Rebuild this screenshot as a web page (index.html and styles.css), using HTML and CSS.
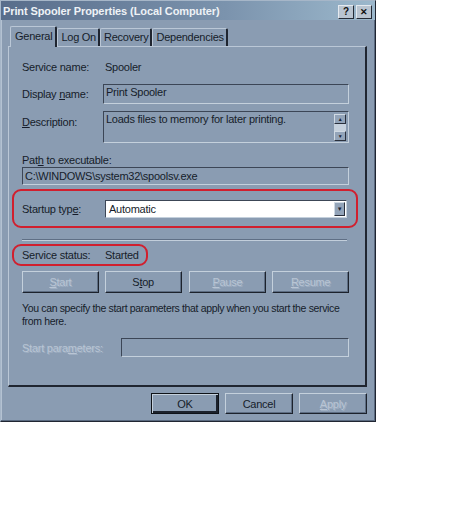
FILE: index.html
```html
<!DOCTYPE html>
<html lang="en">
<head>
  <meta charset="UTF-8" />
  <title>Print Spooler Properties (Local Computer)</title>
  <link rel="stylesheet" href="styles.css">
</head>
<body>
  <div class="window">
    <div class="titlebar">
      <span class="title">Print Spooler Properties (Local Computer)</span>
      <div class="caption-btns">
        <span class="cap-btn">?</span>
        <span class="cap-btn cap-close">&#10005;</span>
      </div>
    </div>

    <div class="tabs">
      <span class="tab active">General</span>
      <span class="tab">Log On</span>
      <span class="tab">Recovery</span>
      <span class="tab">Dependencies</span>
    </div>

    <div class="panel">
      <div class="row row-name">
        <span class="label">Service name:</span>
        <span class="value">Spooler</span>
      </div>

      <div class="row row-display">
        <span class="label">Display <u>n</u>ame:</span>
        <div class="field field-display">Print Spooler</div>
      </div>

      <div class="row row-desc">
        <span class="label label-desc"><u>D</u>escription:</span>
        <div class="field field-desc">
          <span>Loads files to memory for later printing.</span>
          <div class="scroll">
            <span class="sb-btn">&#9650;</span>
            <span class="sb-track"></span>
            <span class="sb-btn">&#9660;</span>
          </div>
        </div>
      </div>

      <div class="path-label">Pat<u>h</u> to executable:</div>
      <div class="field field-path">C:\WINDOWS\system32\spoolsv.exe</div>

      <div class="marked marked-startup">
        <span class="label">Startup typ<u>e</u>:</span>
        <div class="combo">
          <span>Automatic</span>
          <span class="combo-btn">&#9660;</span>
        </div>
      </div>

      <div class="separator"></div>

      <div class="marked marked-status">
        <span class="label">Service status:</span>
        <span class="value">Started</span>
      </div>

      <div class="svc-buttons">
        <span class="btn disabled"><u>S</u>tart</span>
        <span class="btn">S<u>t</u>op</span>
        <span class="btn disabled"><u>P</u>ause</span>
        <span class="btn disabled"><u>R</u>esume</span>
      </div>

      <p class="hint">You can specify the start parameters that apply when you start the service<br>from here.</p>

      <div class="row row-params">
        <span class="label disabled-text">Start para<u>m</u>eters:</span>
        <div class="field field-params"></div>
      </div>
    </div>

    <div class="dialog-buttons">
      <span class="btn default">OK</span>
      <span class="btn">Cancel</span>
      <span class="btn disabled"><u>A</u>pply</span>
    </div>
  </div>
</body>
</html>
```

FILE: styles.css
```css
body {
  margin: 0;
  background: #fff;
  font-family: "Liberation Sans", Arial, sans-serif;
  font-size: 11px;
  letter-spacing: -0.25px;
  color: #161c2a;
}
u {
  text-decoration: underline;
  text-underline-offset: 1px;
}
.window {
  width: 374px;
  height: 420px;
  background: #8a9cb2;
  border-top: 1px solid #a6b6c8;
  border-left: 1px solid #a6b6c8;
  border-right: 1px solid #202632;
  border-bottom: 1px solid #202632;
  box-shadow: inset -1px -1px 0 #5a6a80, inset 1px 1px 0 #b4c2d2;
}
.titlebar {
  height: 19px;
  background: linear-gradient(to right, #586d8b, #7b93ad 60%, #9cb8cc);
  display: flex;
  align-items: center;
  justify-content: space-between;
  padding: 0 3px 0 2px;
}
.title {
  color: #eef2f6;
  font-weight: bold;
  letter-spacing: -0.1px;
}
.caption-btns {
  display: flex;
  gap: 2px;
  margin-top: 2px;
}
.cap-btn {
  width: 14px;
  height: 12px;
  background: #b9c4d0;
  border-top: 1px solid #e4e9ef;
  border-left: 1px solid #e4e9ef;
  border-right: 1px solid #252b36;
  border-bottom: 1px solid #252b36;
  font-size: 10px;
  font-weight: bold;
  line-height: 12px;
  text-align: center;
  letter-spacing: 0;
  color: #111;
}
.cap-close {
  font-size: 9px;
}

/* tabs */
.tabs {
  display: flex;
  align-items: flex-end;
  height: 20px;
  margin-top: 6px;
  padding-left: 9px;
  position: relative;
  z-index: 1;
}
.tab {
  height: 17px;
  line-height: 17px;
  padding: 0 2px 0 3px;
  border-top: 1px solid #bac7d6;
  border-left: 1px solid #bac7d6;
  border-right: 2px solid #1f2530;
  border-radius: 2px 2px 0 0;
}
.tab.active {
  height: 20px;
  line-height: 19px;
  padding: 0 3px 0 4px;
  margin-bottom: -1px;
  background: #8a9cb2;
}

/* tab page */
.panel {
  margin: 0 8px 0 7px;
  height: 338px;
  border-top: 1px solid #bac7d6;
  border-left: 1px solid #bac7d6;
  border-right: 2px solid #1f2530;
  border-bottom: 2px solid #1f2530;
  padding: 0 16px 0 13px;
}
.row {
  display: flex;
  align-items: center;
}
.label {
  width: 83px;
  flex: none;
}
.row-name {
  height: 16px;
  margin-top: 12px;
}
.field {
  box-sizing: border-box;
  border-top: 1px solid #3c4656;
  border-left: 1px solid #3c4656;
  border-right: 1px solid #c4d0dc;
  border-bottom: 1px solid #c4d0dc;
  padding: 1px 2px;
}
.row-display {
  margin-top: 9px;
}
.field-display {
  margin-left: -2px;
  width: 248px;
  height: 20px;
}
.row-desc {
  margin-top: 7px;
  align-items: flex-start;
}
.label-desc {
  padding-top: 5px;
}
.field-desc {
  margin-left: -2px;
  width: 248px;
  height: 32px;
  display: flex;
  justify-content: space-between;
}
.scroll {
  width: 12px;
  display: flex;
  flex-direction: column;
  margin-top: 1px;
}
.sb-btn {
  height: 10px;
  background: #93a4b9;
  border-top: 1px solid #d0dae4;
  border-left: 1px solid #d0dae4;
  border-right: 1px solid #2a303c;
  border-bottom: 1px solid #2a303c;
  box-sizing: border-box;
  font-size: 5px;
  line-height: 8px;
  text-align: center;
  color: #1c2230;
}
.sb-track {
  height: 8px;
  background: #c6d1dd;
}
.path-label {
  margin-top: 10px;
  height: 14px;
  line-height: 14px;
}
.field-path {
  width: 327px;
  height: 18px;
  line-height: 14px;
}

/* red annotation rings */
.marked {
  display: flex;
  align-items: center;
  border: 2px solid #d11f2e;
  border-radius: 9px;
  margin-left: -10px;
  padding-left: 8px;
}
.marked-startup {
  margin-top: 4px;
  width: 334px;
  height: 35px;
}
.combo {
  width: 242px;
  height: 18px;
  box-sizing: border-box;
  background: #fff;
  border-top: 1px solid #3c4656;
  border-left: 1px solid #3c4656;
  border-right: 1px solid #c4d0dc;
  border-bottom: 1px solid #c4d0dc;
  display: flex;
  align-items: center;
  justify-content: space-between;
  padding-left: 3px;
}
.combo-btn {
  width: 11px;
  height: 14px;
  margin-right: 1px;
  background: #93a4b9;
  border-top: 1px solid #d0dae4;
  border-left: 1px solid #d0dae4;
  border-right: 1px solid #2a303c;
  border-bottom: 1px solid #2a303c;
  box-sizing: border-box;
  font-size: 6px;
  line-height: 12px;
  text-align: center;
  color: #1c2230;
}
.separator {
  margin-top: 11px;
  width: 325px;
  border-top: 1px solid #5f6f85;
  border-bottom: 1px solid #c2cedb;
}
.marked-status {
  margin-top: 3px;
  width: 124px;
  height: 18px;
}

/* buttons */
.btn {
  box-sizing: border-box;
  height: 22px;
  display: flex;
  align-items: center;
  justify-content: center;
  border-top: 1px solid #c4d0dc;
  border-left: 1px solid #c4d0dc;
  border-right: 1px solid #1c222c;
  border-bottom: 1px solid #1c222c;
  box-shadow: inset -1px -1px 0 #5d6d83;
}
.btn.disabled,
.disabled-text {
  color: #b9c5d4;
  text-shadow: 1px 1px 0 #9eaec2;
}
.btn.default {
  border: 1px solid #0e1218;
  box-shadow: inset 1px 1px 0 #c4d0dc, inset -2px -2px 0 #1c222c;
}
.svc-buttons {
  display: flex;
  gap: 6px;
  margin-top: 5px;
}
.svc-buttons .btn {
  width: 77px;
}
.svc-buttons .btn:nth-child(3) {
  margin-left: 1px;
  width: 78px;
}
.hint {
  margin: 9px 0 0;
  font-size: 10.5px;
  letter-spacing: -0.35px;
  line-height: 13px;
  white-space: nowrap;
}
.row-params {
  margin-top: 10px;
}
.row-params .label {
  width: 99px;
}
.field-params {
  width: 228px;
  height: 19px;
}
.dialog-buttons {
  display: flex;
  gap: 6px;
  justify-content: flex-end;
  padding: 6px 8px 0 0;
}
.dialog-buttons .btn {
  width: 68px;
  height: 21px;
}
```
